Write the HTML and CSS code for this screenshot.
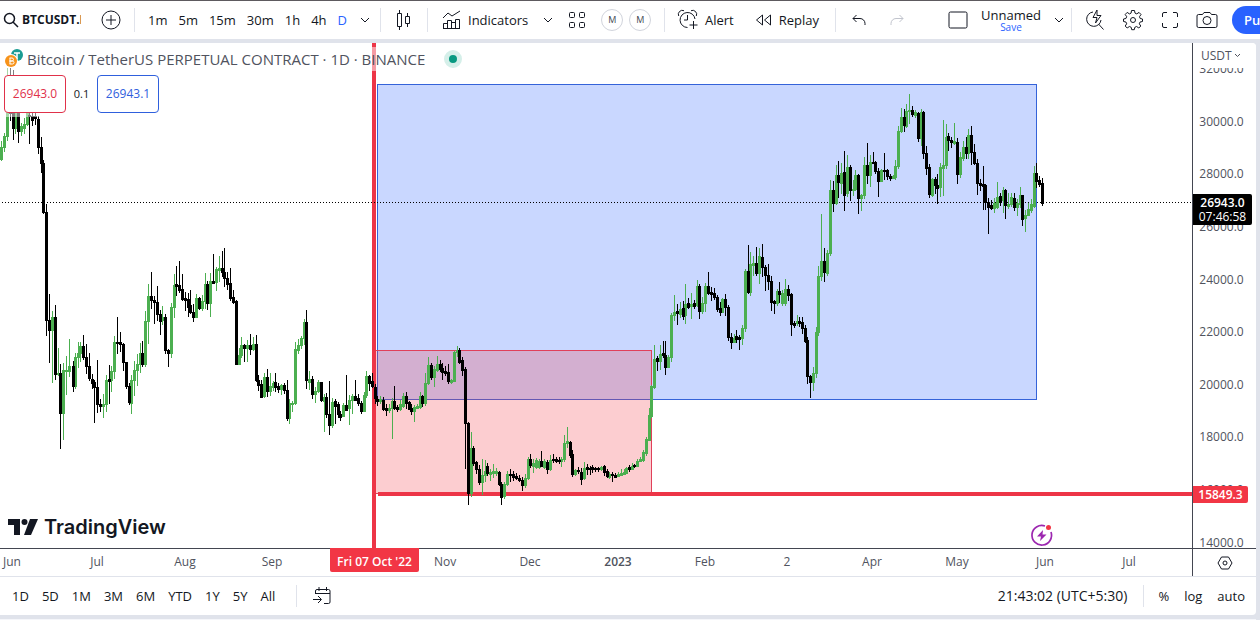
FILE: index.html
```html
<!DOCTYPE html>
<html lang="en">
<head>
    <meta charset="UTF-8">
    <title>BTCUSDT.P</title>
    <link rel="stylesheet" href="styles.css">
</head>
<body>
<div class="page">
    <header class="toolbar">
        <div class="group symbol">
            <button class="btn search">
                <svg width="16" height="16" viewBox="0 0 16 16"><circle cx="6.5" cy="6.5" r="5" stroke-width="1.5"/><path d="M10 10l5 5" stroke-width="1.5"/></svg>
                <b>BTCUSDT.P</b>
            </button>
            <button class="btn" aria-label="Compare">
                <svg width="20" height="20" viewBox="0 0 20 20"><circle cx="10" cy="10" r="9"/><path d="M10 5v10M5 10h10"/></svg>
            </button>
        </div>
        <div class="group intervals">
            <button class="btn">1m</button>
            <button class="btn">5m</button>
            <button class="btn">15m</button>
            <button class="btn">30m</button>
            <button class="btn">1h</button>
            <button class="btn">4h</button>
            <button class="btn on">D</button>
            <button class="btn more" aria-label="More intervals">
                <svg width="10" height="6" viewBox="0 0 10 6"><path d="M1 1l4 4 4-4"/></svg>
            </button>
        </div>
        <div class="group style">
            <button class="btn" aria-label="Candles">
                <svg width="16" height="20" viewBox="0 0 16 20"><path d="M3.5 0v3M3.5 17v3M1.5 3.5h4v13h-4zM11.5 3v3M11.5 14v3M9.5 6.5h4v7h-4z"/></svg>
            </button>
        </div>
        <div class="group indicators">
            <button class="btn">
                <svg width="20" height="20" viewBox="0 0 20 20"><path d="M1 8l5-5 4 3 8-5M1.5 18.5v-5h4v5zM5.5 18.5v-8h4v8M9.5 12.5h4v6M13.5 18.5v-9h4v9zM1 18.5h17"/></svg>
                <span>Indicators</span>
            </button>
            <button class="btn" aria-label="Favorite indicators">
                <svg width="10" height="6" viewBox="0 0 10 6"><path d="M1 1l4 4 4-4"/></svg>
            </button>
            <button class="btn" aria-label="Templates">
                <svg width="18" height="18" viewBox="0 0 18 18"><rect x="1.5" y="1.5" width="5" height="5" rx="1"/><rect x="11.5" y="1.5" width="5" height="5" rx="1"/><rect x="1.5" y="11.5" width="5" height="5" rx="1"/><rect x="11.5" y="11.5" width="5" height="5" rx="1"/></svg>
            </button>
            <div class="rounds">
                <button class="btn round">M</button>
                <button class="btn round">M</button>
            </div>
        </div>
        <div class="group alerts">
            <button class="btn">
                <svg width="22" height="22" viewBox="0 0 22 22"><path d="M18 10a7.5 7.5 0 1 0-7.5 8.5M10.5 6v5H7M1.7 7A4 4 0 0 1 7 1.7M14 1.7A4 4 0 0 1 19.3 7M16.5 12v8M12.5 16h8"/></svg>
                <span>Alert</span>
            </button>
            <button class="btn">
                <svg width="18" height="14" viewBox="0 0 18 14"><path d="M7.5 2v10L1.5 7zM15.5 2v10l-6-5z"/></svg>
                <span>Replay</span>
            </button>
        </div>
        <div class="group history">
            <button class="btn" aria-label="Undo">
                <svg width="14" height="12" viewBox="0 0 14 12"><path d="M4.5 1L1 4.5 4.5 8M1 4.5h7a5 5 0 0 1 5 5V11"/></svg>
            </button>
            <button class="btn off" aria-label="Redo">
                <svg width="14" height="12" viewBox="0 0 14 12"><path d="M9.5 1L13 4.5 9.5 8M13 4.5H6a5 5 0 0 0-5 5V11"/></svg>
            </button>
        </div>
        <div class="group layout">
            <button class="btn" aria-label="Select layout">
                <svg width="20" height="18" viewBox="0 0 20 18"><rect x="1" y="1" width="18" height="16" rx="1.5"/></svg>
            </button>
            <button class="btn name">Unnamed<small>Save</small></button>
            <button class="btn" aria-label="Manage layouts">
                <svg width="10" height="6" viewBox="0 0 10 6"><path d="M1 1l4 4 4-4"/></svg>
            </button>
        </div>
        <div class="group tools">
            <button class="btn" aria-label="Quick search">
                <svg width="20" height="22" viewBox="0 0 20 22"><path d="M8 3a7.2 7.2 0 1 0 8 8M13.5 15l5 5.5M12 1L8 8.5h4L10.5 14 16 6.5h-4z"/></svg>
            </button>
            <button class="btn" aria-label="Settings">
                <svg width="22" height="22" viewBox="0 0 22 22"><circle cx="11" cy="11" r="2.5"/><path d="M9.5 1.5h3l.5 2.6 1.8.8L17 3.4 19 5.5l-1.5 2.2.7 1.8 2.3.5v2.5l-2.4.5-.8 1.8L18.8 17l-2 2-2.2-1.5-1.8.8-.5 2.4H9.7l-.5-2.4-1.8-.8L5.2 19l-2-2 1.5-2.2-.8-1.8-2.4-.5V10l2.4-.5.8-1.8L3.2 5.5l2-2.1 2.2 1.5 1.7-.8z"/></svg>
            </button>
            <button class="btn" aria-label="Fullscreen">
                <svg width="18" height="18" viewBox="0 0 18 18"><path d="M1.5 6V3a1.5 1.5 0 0 1 1.5-1.5h3M12 1.5h3A1.5 1.5 0 0 1 16.5 3v3M16.5 12v3a1.5 1.5 0 0 1-1.5 1.5h-3M6 16.5H3A1.5 1.5 0 0 1 1.5 15v-3"/></svg>
            </button>
            <button class="btn" aria-label="Snapshot">
                <svg width="22" height="18" viewBox="0 0 22 18"><path d="M2.5 3.5h4l1.5-2h6l1.5 2h4a1.5 1.5 0 0 1 1.5 1.5v10a1.5 1.5 0 0 1-1.5 1.5h-17A1.5 1.5 0 0 1 1 15V5a1.5 1.5 0 0 1 1.5-1.5z"/><circle cx="11" cy="9.5" r="4"/></svg>
            </button>
        </div>
        <button class="btn publish">Publish</button>
    </header>

    <main class="panel">
        <div class="chartRow">
            <section class="chart">
                <svg class="plot" id="plot">
                    <g transform="translate(0,-43)">
                        <rect class="boxBlue" x="377.5" y="84.5" width="659" height="315"/>
                        <rect class="boxRed" x="375.5" y="350.5" width="276" height="143"/>
                        <path class="level" d="M378 494H4000"/>
                        <path class="level" d="M374 43V4000"/>
                        <path class="last" d="M2 202.5H4000"/>
                        <path class="up" id="up"/>
                        <path class="down" id="down"/>
                    </g>
                </svg>
                <div class="legend">
                    <div class="title">
                        <svg width="20" height="20" viewBox="0 0 20 20">
                            <circle cx="13" cy="6" r="6" fill="#1a9c93" stroke="none"/>
                            <path d="M10 4h6M13 4v6" stroke="#fff" stroke-width="1.5"/>
                            <circle cx="7" cy="12" r="7" fill="#fff" stroke="none"/>
                            <circle cx="7" cy="12" r="6" fill="#f7931a" stroke="none"/>
                            <path d="M5.5 9h2.5a1.4 1.4 0 0 1 0 3H5.5h3a1.5 1.5 0 0 1 0 3h-3M6 9v6" stroke="#fff"/>
                        </svg>
                        <h1>Bitcoin / TetherUS PERPETUAL CONTRACT · 1D · BINANCE</h1>
                        <i class="status"></i>
                    </div>
                    <div class="trade">
                        <button class="btn price sell">26943.0</button>
                        <span>0.1</span>
                        <button class="btn price buy">26943.1</button>
                    </div>
                </div>
                <div class="logo">
                    <svg width="30" height="16" viewBox="0 0 30 16"><path d="M0 0h12v16H6V6H0z"/><circle cx="16.5" cy="3" r="3"/><path d="M22 0h8l-7 16h-7z"/></svg>
                    <span>TradingView</span>
                </div>
                <svg class="event" width="24" height="24" viewBox="0 0 24 24">
                    <path d="M15 3a9.8 9.8 0 1 0 6 6" stroke="#9c27b0" stroke-width="1.7"/>
                    <path d="M13 7l-6 6.5h4L10 18l6.5-6.5h-4z" fill="#9c27b0" stroke="none"/>
                    <circle cx="18.5" cy="4.5" r="2.5" fill="#f23645" stroke="none"/>
                </svg>
            </section>
            <aside class="priceAxis">
                <ol>
                    <li>32000.0</li>
                    <li>30000.0</li>
                    <li>28000.0</li>
                    <li>26000.0</li>
                    <li>24000.0</li>
                    <li>22000.0</li>
                    <li>20000.0</li>
                    <li>18000.0</li>
                    <li>16000.0</li>
                    <li>14000.0</li>
                </ol>
                <div class="currency">
                    <select aria-label="Currency"><option>USDT</option></select>
                    <svg width="7" height="5" viewBox="0 0 7 5"><path d="M1 1l2.5 2.5L6 1"/></svg>
                </div>
                <div class="tag now">26943.0<time>07:46:58</time></div>
                <div class="tag line">15849.3</div>
            </aside>
        </div>
        <div class="timeRow">
            <div class="timeAxis">
                <svg class="months">
                    <text x="12" y="17">Jun</text>
                    <text x="97" y="17">Jul</text>
                    <text x="185" y="17">Aug</text>
                    <text x="272" y="17">Sep</text>
                    <text x="445" y="17">Nov</text>
                    <text x="530" y="17">Dec</text>
                    <text x="618" y="17" class="year">2023</text>
                    <text x="705" y="17">Feb</text>
                    <text x="787" y="17">2</text>
                    <text x="872" y="17">Apr</text>
                    <text x="957" y="17">May</text>
                    <text x="1045" y="17">Jun</text>
                    <text x="1129" y="17">Jul</text>
                </svg>
                <div class="tag date">Fri 07 Oct '22</div>
            </div>
            <button class="btn corner" aria-label="Axis settings">
                <svg width="16" height="14" viewBox="0 0 16 14"><path d="M4.5 1h7L15 7l-3.5 6h-7L1 7z"/><circle cx="8" cy="7" r="2"/></svg>
            </button>
        </div>
        <footer class="bottom">
            <div class="ranges">
                <button class="btn">1D</button>
                <button class="btn">5D</button>
                <button class="btn">1M</button>
                <button class="btn">3M</button>
                <button class="btn">6M</button>
                <button class="btn">YTD</button>
                <button class="btn">1Y</button>
                <button class="btn">5Y</button>
                <button class="btn">All</button>
            </div>
            <button class="btn goto" aria-label="Go to date">
                <svg width="18" height="18" viewBox="0 0 18 18"><path d="M2.5 7V4A1.5 1.5 0 0 1 4 2.5h11.5A1.5 1.5 0 0 1 17 4v11a1.5 1.5 0 0 1-1.5 1.5H11M2.5 6.5H17M6 0v4M13.5 0v4M0 12.5h8M5 9l3.5 3.5L5 16"/></svg>
            </button>
            <button class="btn clock">21:43:02 (UTC+5:30)</button>
            <div class="scale">
                <button class="btn">%</button>
                <button class="btn">log</button>
                <button class="btn">auto</button>
            </div>
        </footer>
    </main>
    <div class="under"></div>
</div>
<script src="chart.js"></script>
</body>
</html>
```
FILE: styles.css
```css
*{
    margin:0;
    padding:0;
    box-sizing: border-box;
    list-style: none;
}
body{
    background: #e0e3eb;
    color: #131722;
    font: 13px/18px "Trebuchet MS", "Open Sans", "Noto Sans", sans-serif;
}
svg{
    display: block;
    flex: none;
    fill: none;
    stroke: currentColor;
}
.page{
    min-height: 100vh;
    display: flex;
    flex-direction: column;
    gap: 4px;
    overflow: hidden;
}
.btn{
    display: flex;
    align-items: center;
    gap: 6px;
    border: 0;
    background: none;
    color: inherit;
    font: inherit;
    white-space: nowrap;
    cursor: pointer;
}

/* top toolbar */
.toolbar{
    height: 39px;
    display: flex;
    align-items: center;
    background: #fff;
    border-top: 1px solid #5d5a5f;
    overflow: hidden;
}
.group{
    flex: none;
    height: 24px;
    display: flex;
    align-items: center;
    border-right: 1px solid #e0e3eb;
}
.symbol{
    width: 135px;
    padding-left: 3px;
    gap: 20px;
}
.search{
    width: 78px;
    gap: 3px;
    overflow: hidden;
}
.search b{
    width: 59px;
    overflow: hidden;
    font-size: 12px;
    text-align: left;
}
.intervals{
    width: 246px;
    padding-left: 13px;
    gap: 11px;
}
.intervals .on{
    color: #2962ff;
}
.more{
    margin-left: 2px;
}
.style{
    width: 47px;
    justify-content: center;
}
.indicators{
    width: 237px;
    padding-left: 14px;
    gap: 15px;
}
.rounds{
    display: flex;
    gap: 6px;
}
.round{
    width: 22px;
    height: 22px;
    justify-content: center;
    border: 1px solid #d1d4dc;
    border-radius: 50%;
    color: #434651;
    font-size: 9px;
}
.alerts{
    width: 171px;
    padding-left: 12px;
    gap: 21px;
}
.history{
    width: 98px;
    padding-left: 16px;
    gap: 24px;
    border: 0;
}
.off{
    color: #c1c4cd;
}
.layout{
    width: 138px;
    padding-left: 14px;
    gap: 13px;
}
.name{
    flex-direction: column;
    gap: 0;
    line-height: 14px;
}
.name small{
    color: #2962ff;
    font-size: 10px;
    line-height: 10px;
}
.tools{
    width: 160px;
    padding-left: 13px;
    gap: 17px;
    border: 0;
}
.publish{
    flex: none;
    height: 28px;
    padding: 0 12px;
    border-radius: 14px;
    background: #2962ff;
    color: #fff;
    font-weight: 600;
}

/* chart */
.panel{
    flex: 1;
    display: flex;
    flex-direction: column;
    margin-right: 4px;
    background: #fff;
    border-radius: 0 4px 4px 0;
    overflow: hidden;
}
.chartRow{
    flex: 1;
    display: flex;
}
.chart{
    flex: 1;
    position: relative;
    min-width: 0;
    min-height: 500px;
    overflow: hidden;
}
.plot{
    position: absolute;
    width: 100%;
    height: 100%;
}
.boxBlue{
    fill: #c9d7ff;
    stroke: #3563d9;
}
.boxRed{
    fill: rgba(242, 54, 69, .25);
    stroke: #e0405a;
}
.level{
    stroke: #ed3547;
    stroke-width: 4;
}
.last{
    stroke: #000;
    stroke-dasharray: 1 2;
}
.up{
    fill: #4caf50;
    stroke: none;
}
.down{
    fill: #000;
    stroke: none;
}
.legend{
    position: absolute;
    top: 4px;
    left: 0;
}
.title{
    height: 24px;
    display: flex;
    align-items: center;
    gap: 3px;
    padding-left: 4px;
    background: rgba(255, 255, 255, .5);
}
.title h1{
    color: #50535e;
    font-size: 15px;
    font-weight: 400;
}
.status{
    width: 18px;
    height: 18px;
    margin-left: 16px;
    border: 5px solid #d5efe9;
    border-radius: 50%;
    background: #089981;
}
.trade{
    width: 162px;
    display: flex;
    align-items: center;
    justify-content: space-between;
    padding: 4px 3px 4px 4px;
    background: rgba(255, 255, 255, .5);
    font-size: 11px;
}
.price{
    height: 38px;
    width: 62px;
    justify-content: center;
    border: 1px solid;
    border-radius: 4px;
    background: #fff;
    font-size: 12px;
}
.sell{
    color: #e0314a;
}
.buy{
    color: #2f60dd;
}
.logo{
    position: absolute;
    left: 8px;
    bottom: 8px;
    display: flex;
    align-items: center;
    gap: 6px;
    font: 600 20px/26px Inter, sans-serif;
}
.logo svg{
    fill: currentColor;
    stroke: none;
}
.event{
    position: absolute;
    left: 1030px;
    bottom: 1px;
}

/* axes */
.priceAxis{
    width: 64px;
    height: 505px;
    position: relative;
    overflow: hidden;
    border-left: 1px solid #434651;
    color: #50535e;
    font-size: 12px;
    text-align: center;
    min-height: 100%;
}
.priceAxis ol{
    height: 526px;
    display: flex;
    flex-direction: column;
    padding-right: 6px;
}
.priceAxis li{
    flex: 1;
    display: flex;
    align-items: center;
    justify-content: center;
}
.currency{
    position: absolute;
    top: 0;
    left: 0;
    right: 0;
    height: 25px;
    display: flex;
    align-items: center;
    gap: 2px;
    padding-left: 8px;
    background: #fff;
}
.currency select{
    appearance: none;
    border: 0;
    background: none;
    color: inherit;
    font: inherit;
}
.tag{
    position: absolute;
    background: #f23645;
    border-radius: 0 2px 2px 0;
    color: #fff;
    font-size: 12px;
    font-weight: 600;
}
.now{
    top: 151px;
    left: 0;
    width: 59px;
    height: 31px;
    padding-top: 1px;
    background: #000;
    line-height: 15px;
}
.now time{
    display: block;
    line-height: 13px;
    font-weight: 400;
}
.line{
    top: 443px;
    left: 0;
    width: 55px;
    line-height: 17px;
}
.timeRow{
    display: flex;
    height: 29px;
    border-top: 1px solid #434651;
    border-bottom: 1px solid #e0e3eb;
}
.timeAxis{
    flex: 1;
    position: relative;
}
.months{
    width: 100%;
    height: 27px;
}
.months text{
    fill: #50535e;
    stroke: none;
    font-size: 12px;
    text-anchor: middle;
}
.months .year{
    font-weight: 600;
}
.date{
    top: -1px;
    left: 330px;
    width: 89px;
    height: 24px;
    border-radius: 0 0 2px 2px;
    line-height: 27px;
    text-align: center;
}
.corner{
    width: 64px;
    justify-content: center;
    border-left: 1px solid #434651;
}

/* bottom bar */
.bottom{
    height: 38px;
    display: flex;
    align-items: center;
    padding: 0 11px 0 12px;
}
.ranges{
    width: 285px;
    height: 22px;
    display: flex;
    gap: 13px;
    border-right: 1px solid #e0e3eb;
}
.goto{
    margin-left: 16px;
}
.clock{
    margin-left: auto;
    font-size: 14px;
}
.scale{
    height: 22px;
    display: flex;
    gap: 15px;
    margin-left: 16px;
    padding-left: 14px;
    border-left: 1px solid #e0e3eb;
}
.under{
    height: 1px;
    margin-right: 4px;
    background: #f5f6fa;
}
```
FILE: chart.js
```javascript
// x, high, body top, body bottom, low; g - up, k - down
var data = `
g 1 141 147 159 160|g 4 133 136 147 151|g 7 68 100 136 140|k 10 68 106 113 120|k 13 70 100 128 139|g 15 90 104 128 133|k 18 108 113 131 142
g 21 123 126 131 135|g 24 118 124 128 133|g 27 108 110 124 125|k 29 108 115 116 143|k 32 108 116 120 125|k 35 108 116 118 124|k 38 116 119 147 153
k 41 137 147 163 172|k 43 160 163 212 213|k 46 204 212 320 335|k 49 294 320 330 362|g 52 311 317 330 382|k 55 305 317 374 379|g 58 348 373 374 375
k 60 364 373 413 448|g 63 363 370 413 439|g 66 356 370 371 394|g 69 339 366 371 376|k 73 361 366 386 391|g 75 353 357 386 388|g 78 342 353 357 367
g 80 342 346 353 361|k 83 335 346 357 359|k 86 344 357 366 373|k 89 353 366 378 380|k 92 374 379 383 388|k 94 380 382 387 422|k 97 360 387 404 412
k 100 399 404 406 411|g 103 394 404 406 417|g 106 375 380 404 411|k 109 365 379 381 403|g 111 366 371 380 391|g 114 336 342 371 378|k 117 317 342 343 353
k 120 332 342 344 351|k 123 343 344 362 370|k 126 362 362 386 388|k 129 383 386 402 404|g 131 375 380 403 413|g 134 361 370 380 395|g 137 354 364 370 385
g 140 343 353 364 372|k 142 341 353 364 366|g 145 311 321 364 366|g 148 284 296 321 343|k 151 272 296 300 308|k 154 296 300 302 323|k 157 286 302 314 320
k 160 310 314 321 334|g 162 306 317 320 324|k 165 314 317 350 353|k 168 349 350 353 366|g 171 303 307 353 357|g 174 274 285 307 317|k 176 266 284 286 295
k 179 261 285 290 292|k 182 274 289 299 300|k 185 292 298 300 310|k 188 293 299 307 316|k 190 290 305 312 313|k 193 304 312 317 321|g 196 294 298 317 317
k 199 297 298 308 309|g 202 295 301 308 310|g 205 273 284 301 308|k 207 281 284 303 309|g 210 273 281 303 316|k 213 254 281 283 283|g 216 267 269 282 290
g 219 256 268 270 281|k 222 251 268 272 276|k 224 248 272 278 286|k 227 272 278 284 289|k 230 268 283 298 300|k 233 290 297 302 303|k 236 300 301 364 364
g 239 348 355 364 364|g 241 337 345 355 357|k 244 344 345 348 361|g 247 340 345 348 361|k 250 334 345 349 354|g 253 337 344 349 350|k 256 335 344 380 381
k 258 375 380 385 390|k 261 380 384 397 397|g 264 373 377 396 397|k 267 369 377 391 396|g 270 373 386 391 395|g 273 381 383 387 390|k 275 373 382 387 391
k 278 383 386 389 392|g 281 384 385 389 394|k 284 383 385 390 393|k 287 380 390 418 420|g 289 399 403 418 423|g 292 401 403 404 411|g 295 342 349 403 404
g 298 339 345 350 353|g 301 336 338 345 348|g 304 319 322 338 344|k 306 310 322 380 388|g 309 371 379 382 389|k 312 376 379 394 398|g 315 387 391 394 402
g 318 380 382 391 392|k 321 382 382 400 401|g 324 394 397 401 431|k 326 393 397 414 417|k 329 381 414 425 434|g 332 398 402 425 427|k 335 399 401 406 423
k 338 402 404 414 417|k 340 411 414 417 420|g 343 403 405 416 416|k 346 375 405 410 410|g 349 395 400 408 424|g 352 394 396 400 413|k 355 380 396 400 400
k 358 394 398 403 405|k 361 401 403 411 413|g 364 392 395 411 411|g 366 371 376 395 397|k 369 375 376 383 390|k 372 373 381 386 387|k 375 384 387 398 403
k 377 396 399 401 405|g 380 396 399 401 403|k 383 397 400 409 410|k 386 404 408 410 415|g 389 404 408 410 412|g 392 398 401 408 438|k 394 386 401 408 409
k 397 405 407 409 411|g 400 400 404 409 410|g 403 393 396 406 407|k 406 392 396 403 408|k 409 401 402 409 409|k 411 404 408 411 414|g 414 405 407 411 421
g 417 404 406 408 408|g 420 392 396 407 408|k 422 395 396 403 406|g 425 373 383 403 405|g 428 357 365 383 384|k 431 363 365 377 379|g 434 366 369 377 386
g 437 356 364 370 371|k 440 360 364 369 371|k 442 363 368 372 379|k 445 366 371 373 375|k 448 364 372 381 383|g 451 379 380 382 383|g 454 351 352 381 381
g 457 346 350 352 356|k 459 348 350 362 363|k 462 357 360 370 375|k 465 367 369 423 468|k 468 422 423 493 504|g 471 432 448 493 496|k 473 446 448 463 465
k 476 461 462 469 473|k 479 465 469 482 484|g 482 459 475 482 494|g 485 460 471 475 481|k 487 463 466 473 475|g 490 469 472 474 480|g 493 464 471 473 477
g 496 468 471 473 475|k 499 471 472 484 485|k 501 482 484 497 504|g 504 482 484 496 498|g 507 471 474 484 485|k 510 469 474 475 481|k 513 471 474 477 480
k 516 473 476 478 479|k 519 475 478 480 481|k 522 477 480 485 490|g 525 474 478 485 487|g 528 457 459 478 479|k 530 454 459 465 467|g 533 459 463 466 472
g 536 458 460 467 468|g 539 459 461 467 468|k 541 451 461 466 466|g 544 459 461 467 468|k 547 460 462 469 473|g 550 455 460 469 470|k 553 454 459 460 462
k 556 457 459 461 462|k 559 457 460 461 463|g 561 457 459 461 466|g 564 435 443 459 461|g 567 427 441 443 447|k 570 441 442 455 457|k 572 450 454 474 476
g 575 469 470 474 475|k 578 467 470 471 473|k 581 468 472 479 484|g 584 462 468 478 479|k 587 464 467 469 474|k 590 466 468 469 474|k 592 465 467 469 472
k 595 467 468 469 471|k 598 467 468 469 471|g 601 466 467 469 470|k 604 465 466 472 475|k 607 469 471 476 477|g 609 472 474 477 478|k 612 472 474 475 481
k 615 473 475 477 477|g 618 472 474 476 476|g 621 469 473 475 475|g 624 469 472 474 474|g 626 467 468 473 473|k 629 465 467 469 471|g 632 463 466 469 469
k 634 464 465 466 467|g 637 459 461 466 466|g 640 457 459 461 461|g 643 450 452 460 461|g 646 437 439 453 455|g 649 408 415 440 440|g 651 385 386 416 417
g 654 345 359 387 388|k 657 356 358 361 370|g 660 345 354 361 369|k 663 341 353 355 357|k 665 341 355 367 374|g 668 355 357 367 367|g 671 313 315 357 361
g 674 295 312 315 320|k 677 304 311 313 324|g 680 302 309 314 317|k 683 301 308 316 319|g 685 284 304 315 323|k 688 298 303 307 308|g 691 293 304 306 318
k 694 300 303 306 308|g 697 280 286 305 306|k 699 284 286 311 318|g 702 297 303 311 313|g 705 283 286 303 311|k 708 272 286 293 294|k 711 287 292 294 300
k 714 288 293 297 299|k 717 295 297 309 311|k 720 302 308 312 315|g 722 298 299 312 312|k 725 294 299 307 315|k 728 305 307 337 340|k 731 333 337 342 348
g 734 334 338 342 342|k 736 330 336 339 342|k 739 335 337 339 349|g 742 325 328 338 344|g 745 269 271 328 331|k 748 245 271 292 293|g 750 252 264 292 295
g 753 256 263 265 275|k 756 247 263 273 275|g 759 248 256 273 283|k 762 244 257 267 276|k 765 265 267 275 290|k 768 264 275 281 289|k 771 276 281 302 310
k 774 300 301 303 313|g 777 289 291 303 305|k 779 282 291 294 302|g 782 290 293 303 305|g 785 279 289 303 305|k 788 285 289 295 300|k 791 293 294 324 335
k 794 321 323 325 327|g 797 315 321 323 325|k 799 317 321 323 326|k 802 317 322 328 333|k 805 325 328 341 342|k 807 337 340 376 383|k 810 375 376 382 397
g 813 367 373 382 390|g 816 327 332 373 377|g 818 266 276 332 335|g 821 214 261 276 280|k 824 248 261 272 281|g 827 250 253 273 275|g 830 180 190 253 255
k 833 181 190 203 211|g 836 165 175 203 204|k 838 161 175 182 197|g 841 163 173 183 193|k 844 151 172 195 210|g 847 155 167 193 196|k 850 165 167 190 200
g 853 180 189 190 195|g 855 170 175 189 190|k 858 174 175 198 213|g 861 194 195 198 210|g 864 157 165 195 198|k 867 143 165 175 183|g 870 155 162 175 186
k 873 152 162 163 163|k 875 161 162 171 173|k 878 168 171 181 196|g 881 169 170 181 181|k 884 153 170 171 179|k 887 169 170 176 179|k 890 174 176 178 180
g 893 175 176 178 178|g 895 160 166 177 179|g 898 126 131 166 168|g 901 108 117 131 132|k 904 109 117 125 131|g 906 104 111 126 127|g 909 94 110 111 123
k 912 106 110 114 116|g 915 110 112 115 117|k 918 112 113 138 141|g 921 109 112 138 145|k 923 111 112 153 158|k 926 146 153 168 174|k 929 164 167 194 197
g 932 178 179 195 196|k 935 177 179 185 193|k 937 174 185 188 203|g 940 163 167 187 196|g 943 120 165 168 195|g 946 124 137 165 168|k 948 133 136 140 150
k 951 137 140 142 147|g 954 123 141 143 144|k 957 138 142 174 183|g 960 152 157 174 177|g 963 141 147 158 160|k 966 137 147 153 158|g 968 129 135 153 158
k 971 126 135 152 164|k 974 144 152 163 164|k 977 159 163 183 194|k 980 179 183 185 190|k 983 166 184 186 209|k 985 184 185 202 209|k 988 198 202 207 233
k 991 200 205 208 209|g 994 198 203 208 212|g 997 182 197 207 208|k 1000 193 196 202 205|g 1003 187 190 200 212|k 1005 189 190 205 218|g 1008 193 204 206 208
g 1011 193 197 204 206|k 1014 193 198 207 210|g 1017 199 203 207 215|g 1020 187 195 204 207|k 1022 195 195 219 225|g 1025 210 215 218 231|g 1028 203 209 215 215
g 1031 199 204 210 212|g 1034 166 173 206 207|k 1036 163 173 181 187|k 1039 176 180 184 186|k 1042 178 183 203 205`;

var up = '', down = '';
data.trim().split(/[|\n]/).forEach(function (row) {
    var c = row.split(' ');
    var x = +c[1], high = +c[2], top = +c[3], bottom = +c[4], low = +c[5];
    var d = 'M' + x + ' ' + high + 'h1V' + (low + 1) + 'h-1z' +
        'M' + (x - 1) + ' ' + top + 'h3V' + (bottom + 1) + 'h-3z';
    if (c[0] == 'g') {
        up += d;
    } else {
        down += d;
    }
});
document.getElementById('up').setAttribute('d', up);
document.getElementById('down').setAttribute('d', down);
```
